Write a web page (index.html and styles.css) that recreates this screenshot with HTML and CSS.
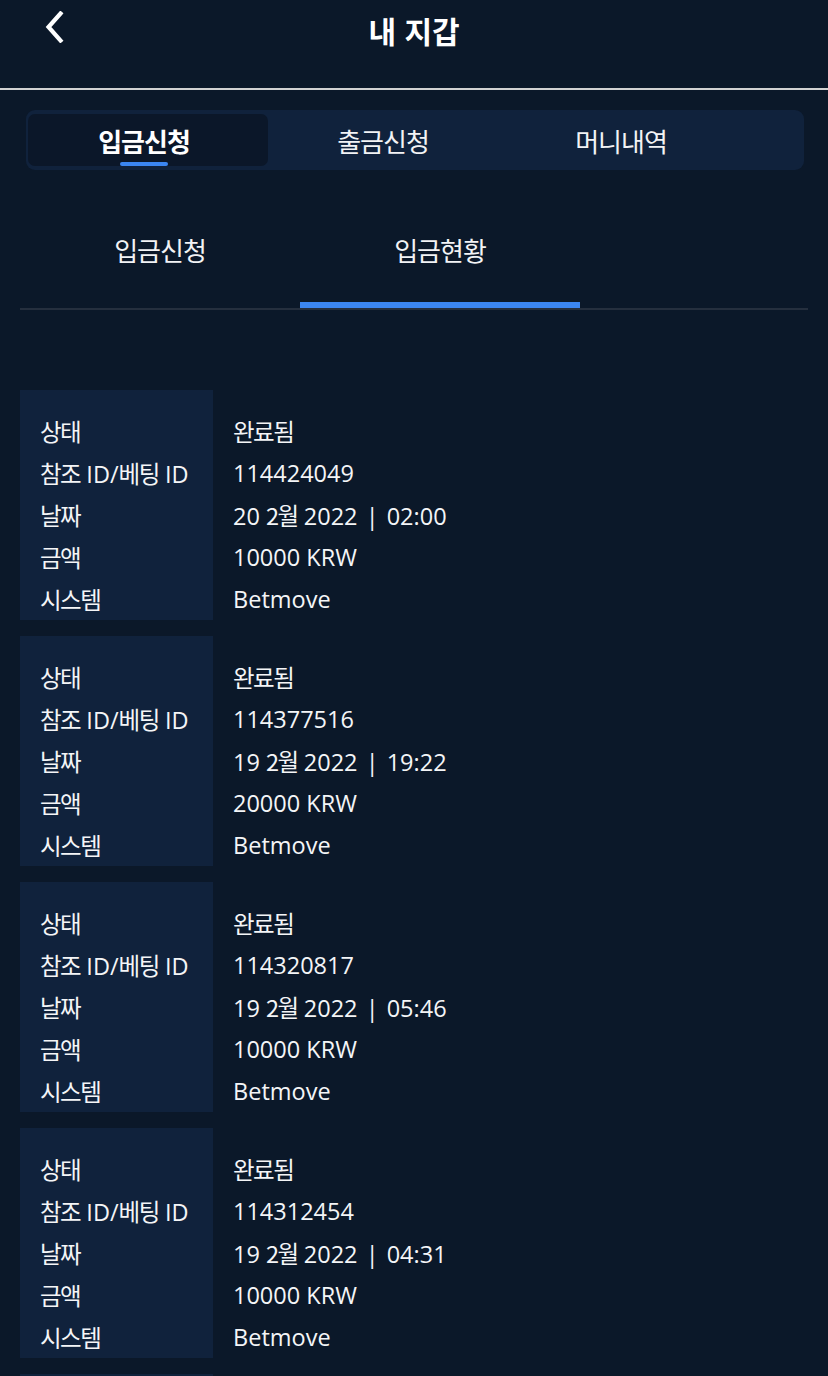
FILE: index.html
```html
<!DOCTYPE html>
<html lang="ko">
<head>
<meta charset="utf-8">
<title>내 지갑</title>
<link rel="stylesheet" href="styles.css">
</head>
<body>
<header class="topbar">
  <button class="back" aria-label="뒤로">
    <svg width="20" height="32" viewBox="0 0 20 32"><path d="M16.5 2.5 L4.5 16 L16.5 29.5" fill="none" stroke="#ffffff" stroke-width="4.2" stroke-linecap="square" stroke-linejoin="miter"/></svg>
  </button>
  <h1 class="title">내 지갑</h1>
  <span class="spacer"></span>
</header>

<nav class="segment">
  <div class="seg-tab active"><span class="ko">입금신청</span></div>
  <div class="seg-tab"><span class="ko">출금신청</span></div>
  <div class="seg-tab"><span class="ko">머니내역</span></div>
</nav>

<nav class="subtabs">
  <div class="sub-tab"><span class="ko">입금신청</span></div>
  <div class="sub-tab active"><span class="ko">입금현황</span></div>
</nav>

<main class="list">
  <section class="card">
    <div class="labels">
      <div class="row ko">상태</div>
      <div class="row"><span class="ko">참조</span> ID/<span class="ko">베팅</span> ID</div>
      <div class="row ko">날짜</div>
      <div class="row ko">금액</div>
      <div class="row ko">시스템</div>
    </div>
    <div class="values">
      <div class="row ko">완료됨</div>
      <div class="row">114424049</div>
      <div class="row">20 <span class="ko">2월</span> 2022 <span class="sep">|</span> 02:00</div>
      <div class="row">10000 KRW</div>
      <div class="row">Betmove</div>
    </div>
  </section>
  <section class="card">
    <div class="labels">
      <div class="row ko">상태</div>
      <div class="row"><span class="ko">참조</span> ID/<span class="ko">베팅</span> ID</div>
      <div class="row ko">날짜</div>
      <div class="row ko">금액</div>
      <div class="row ko">시스템</div>
    </div>
    <div class="values">
      <div class="row ko">완료됨</div>
      <div class="row">114377516</div>
      <div class="row">19 <span class="ko">2월</span> 2022 <span class="sep">|</span> 19:22</div>
      <div class="row">20000 KRW</div>
      <div class="row">Betmove</div>
    </div>
  </section>
  <section class="card">
    <div class="labels">
      <div class="row ko">상태</div>
      <div class="row"><span class="ko">참조</span> ID/<span class="ko">베팅</span> ID</div>
      <div class="row ko">날짜</div>
      <div class="row ko">금액</div>
      <div class="row ko">시스템</div>
    </div>
    <div class="values">
      <div class="row ko">완료됨</div>
      <div class="row">114320817</div>
      <div class="row">19 <span class="ko">2월</span> 2022 <span class="sep">|</span> 05:46</div>
      <div class="row">10000 KRW</div>
      <div class="row">Betmove</div>
    </div>
  </section>
  <section class="card">
    <div class="labels">
      <div class="row ko">상태</div>
      <div class="row"><span class="ko">참조</span> ID/<span class="ko">베팅</span> ID</div>
      <div class="row ko">날짜</div>
      <div class="row ko">금액</div>
      <div class="row ko">시스템</div>
    </div>
    <div class="values">
      <div class="row ko">완료됨</div>
      <div class="row">114312454</div>
      <div class="row">19 <span class="ko">2월</span> 2022 <span class="sep">|</span> 04:31</div>
      <div class="row">10000 KRW</div>
      <div class="row">Betmove</div>
    </div>
  </section>
  <section class="card card-peek" aria-hidden="true">
    <div class="labels"></div>
    <div class="values"></div>
  </section>
</main>
</body>
</html>
```

FILE: styles.css
```css
* {
  box-sizing: border-box;
}

html, body {
  margin: 0;
  padding: 0;
  background: #0b1829;
}

body {
  width: 828px;
  height: 1376px;
  overflow: hidden;
  color: #f4f5f7;
  font-family: "Open Sans", "Noto Sans CJK KR", sans-serif;
}

.ko {
  font-family: "Noto Sans CJK KR", "Open Sans", sans-serif;
  letter-spacing: -1.5px;
}

/* ---------- top bar ---------- */
.topbar {
  display: grid;
  grid-template-columns: 1fr auto 1fr;
  height: 90px;
  border-bottom: 2px solid #d2d2d2;
}

.back {
  justify-self: start;
  align-self: start;
  margin: 11px 0 0 44px;
  padding: 0;
  border: 0;
  background: none;
  width: 20px;
  height: 32px;
  display: flex;
}

.title {
  margin: 0;
  font-family: "Noto Sans CJK KR", sans-serif;
  font-weight: 700;
  font-size: 30px;
  line-height: 60px;
  letter-spacing: 0;
  color: #ffffff;
}

/* ---------- segmented control ---------- */
.segment {
  display: flex;
  margin: 20px 24px 0 26px;
  height: 60px;
  padding: 4px 2px 4px 2px;
  background: #10223c;
  border-radius: 9px;
}

.seg-tab {
  position: relative;
  width: 238px;
  display: flex;
  align-items: center;
  justify-content: center;
  padding-right: 8px;
  font-size: 26px;
  color: #f2f3f5;
  border-radius: 7px;
}

.seg-tab .ko {
  letter-spacing: -1px;
}

.seg-tab.active {
  width: 240px;
  background: #0b1729;
  font-weight: 700;
  color: #ffffff;
}

.seg-tab.active::after {
  content: "";
  position: absolute;
  left: 92px;
  bottom: 0;
  width: 48px;
  height: 4px;
  border-radius: 2px;
  background: #3b86f2;
}

/* ---------- sub tabs ---------- */
.subtabs {
  display: flex;
  margin: 22px 20px 0 20px;
  border-bottom: 2px solid #252f3e;
}

.sub-tab {
  width: 280px;
  height: 116px;
  padding-top: 6px;
  line-height: 104px;
  text-align: center;
  font-size: 26px;
  color: #f2f3f5;
  border-bottom: 6px solid transparent;
}

.sub-tab .ko {
  letter-spacing: -1px;
}

.sub-tab.active {
  border-bottom-color: #3b86f2;
}

/* ---------- cards ---------- */
.list {
  display: flex;
  flex-direction: column;
  gap: 16px;
  margin: 80px 20px 0 20px;
}

.card {
  display: flex;
  flex-shrink: 0;
}

.card-peek {
  height: 230px;
}

.labels {
  width: 193px;
  flex-shrink: 0;
  background: #10223c;
  padding: 20px 0 0 20px;
}

.values {
  flex: 1;
  padding: 20px 0 0 20px;
}

.row {
  height: 42px;
  line-height: 42px;
  font-size: 23.5px;
  white-space: nowrap;
}

.sep {
  display: inline-block;
  margin: 0 2px;
}
```
